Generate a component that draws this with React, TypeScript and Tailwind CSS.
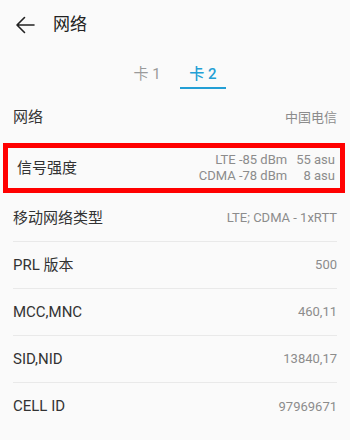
import React from "react";

const font = { fontFamily: 'Roboto, "Noto Sans CJK SC", sans-serif' };

function Row({ label, value, last }: { label: string; value: string; last?: boolean }) {
  return (
    <div
      className={
        last
          ? "mx-[13px] flex h-[47px] items-center justify-between"
          : "mx-[13px] flex h-[47px] items-center justify-between border-b border-[#e9e9e9]"
      }
    >
      <span className="text-[15px] text-[#333333]">{label}</span>
      <span className="text-[13px] text-[#8c8c8c]">{value}</span>
    </div>
  );
}

export default function App() {
  return (
    <div className="h-[440px] w-[350px] overflow-hidden bg-[#fafafa]" style={font}>
      <div className="flex h-[49px] items-center">
        <svg className="ml-[15px]" width="20" height="20" viewBox="0 0 20 20" fill="none">
          <path d="M19 10H2.5M9.5 2.5L2 10l7.5 7.5" stroke="#222" strokeWidth="1.6" strokeLinecap="round" strokeLinejoin="round" />
        </svg>
        <span className="ml-[18px] text-[17px] text-[#222222]">网络</span>
      </div>
      <div className="flex h-[45px] items-start justify-center pt-[14px]">
        <div className="flex w-[46px] flex-col items-center">
          <span className="text-[15px] leading-[22px] text-[#9a9a9a]">卡 1</span>
        </div>
        <div className="ml-[10px] flex w-[46px] flex-col items-center">
          <span className="text-[15px] font-medium leading-[22px] text-[#239fd5]">卡 2</span>
          <div className="mt-[2px] h-[2px] w-[46px] bg-[#239fd5]" />
        </div>
      </div>
      <div className="mx-[13px] flex h-[47px] items-center justify-between">
        <span className="text-[15px] text-[#333333]">网络</span>
        <span className="text-[13px] text-[#8c8c8c]">中国电信</span>
      </div>
      <div className="ml-[3px] mt-[2px] mb-[2px] flex h-[50px] w-[342px] items-center justify-between border-[5px] border-[#ff0000] pl-[9px] pr-[5px]">
        <span className="text-[15px] text-[#333333]">信号强度</span>
        <div className="grid grid-cols-[auto_auto] gap-x-[9px] text-right text-[13px] leading-[16px] text-[#8c8c8c]">
          <span>LTE -85 dBm</span>
          <span>55 asu</span>
          <span>CDMA -78 dBm</span>
          <span>8 asu</span>
        </div>
      </div>
      <Row label="移动网络类型" value="LTE; CDMA - 1xRTT" />
      <Row label="PRL 版本" value="500" />
      <Row label="MCC,MNC" value="460,11" />
      <Row label="SID,NID" value="13840,17" />
      <Row label="CELL ID" value="97969671" last />
    </div>
  );
}
